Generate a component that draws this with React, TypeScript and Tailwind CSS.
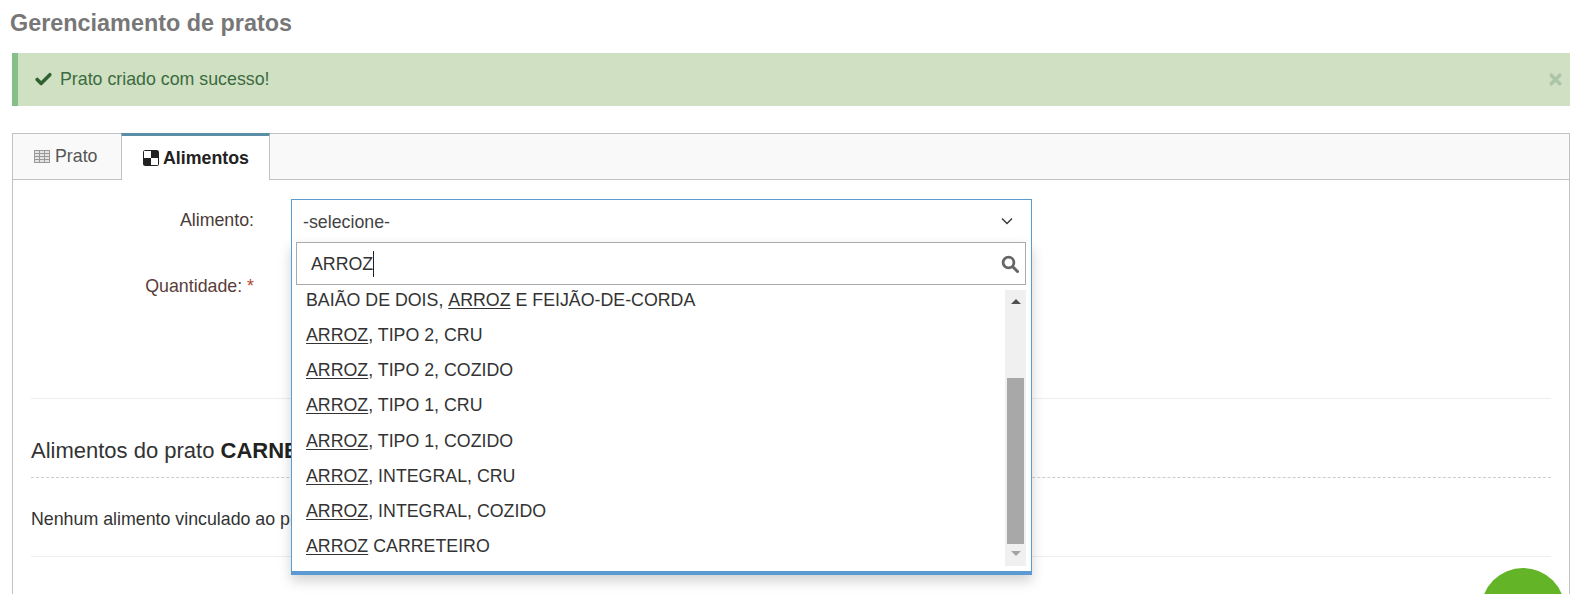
import { Check, X } from "lucide-react";

const options: [string, string, string][] = [
  ["BAIÃO DE DOIS, ", "ARROZ", " E FEIJÃO-DE-CORDA"],
  ["", "ARROZ", ", TIPO 2, CRU"],
  ["", "ARROZ", ", TIPO 2, COZIDO"],
  ["", "ARROZ", ", TIPO 1, CRU"],
  ["", "ARROZ", ", TIPO 1, COZIDO"],
  ["", "ARROZ", ", INTEGRAL, CRU"],
  ["", "ARROZ", ", INTEGRAL, COZIDO"],
  ["", "ARROZ", " CARRETEIRO"],
];

function CheckerIcon() {
  return (
    <svg width="16" height="16" viewBox="0 0 16 16" className="shrink-0">
      <rect width="16" height="16" rx="2.5" fill="#222" />
      <rect x="1" y="1" width="7" height="7" fill="#fff" />
      <rect x="8" y="8" width="7" height="7" fill="#fff" />
    </svg>
  );
}

function GridIcon() {
  return (
    <svg width="16" height="13" viewBox="0 0 16 13" className="shrink-0" fill="none" stroke="#999">
      <rect x="0.5" y="0.5" width="15" height="12" fill="#e4e4e4" />
      <path d="M5.5 0.5v12M10.5 0.5v12M0.5 3.5h15M0.5 6.5h15M0.5 9.5h15" />
    </svg>
  );
}

function SearchIcon() {
  return (
    <svg width="18" height="18" viewBox="0 0 18 18" className="ml-auto shrink-0" fill="none" stroke="#666">
      <circle cx="7.5" cy="7.5" r="5.4" strokeWidth="2.8" />
      <path d="M12 12l4.5 4.5" strokeWidth="3" strokeLinecap="round" />
    </svg>
  );
}

function Dropdown() {
  return (
    <div className="absolute left-0 top-[43px] z-10 h-[333px] w-[741px] border-x border-b-[4px] border-x-[#5b9bd1] border-b-[#5b9bd1] bg-white shadow-[0_6px_12px_rgba(0,0,0,0.18)]">
      <div className="ml-[4px] mr-[5px] flex h-[43px] items-center border border-[#aaa] pl-[14px] pr-[6px] text-[#333]">
        <span className="border-r border-[#222] leading-[26px]">ARROZ</span>
        <SearchIcon />
      </div>
      <div className="mt-[5px] flex h-[276px] pl-[14px] pr-[5px]">
        <ul className="min-w-0 flex-1 -mt-[7px] text-[#333]">
          {options.map(([before, match, after]) => (
            <li key={before + after} className="flex h-[35.1px] items-center whitespace-pre">
              {before}
              <span className="underline underline-offset-2">{match}</span>
              {after}
            </li>
          ))}
        </ul>
        <div className="flex w-[21px] flex-col items-center bg-[#f0f0f0]">
          <div className="h-[88px] w-full pt-[9px]">
            <div className="mx-auto h-0 w-0 border-x-[5px] border-b-[5px] border-x-transparent border-b-[#505050]" />
          </div>
          <div className="h-[166px] w-[17px] bg-[#a8a8a8]" />
          <div className="mt-[7px] h-0 w-0 border-x-[5px] border-t-[5px] border-x-transparent border-t-[#a3a3a3]" />
        </div>
      </div>
    </div>
  );
}

export default function App() {
  return (
    <div className="relative h-[594px] overflow-hidden bg-white font-['Liberation_Sans',Arial,sans-serif] text-[17.8px] text-[#333]">
      <h1 className="pl-[10px] pt-[11px] text-[23.4px] font-bold leading-[24px] text-[#777]">
        Gerenciamento de pratos
      </h1>

      <div className="mx-[12px] mt-[18px] flex h-[53px] w-[1558px] items-center border-l-[6px] border-[#85c088] bg-[#cfe0c3] pl-[16px] pr-[6px] text-[#3c6b3f]">
        <Check size={19} strokeWidth={4.5} className="mr-[7px] text-[#2f6133]" />
        <span>Prato criado com sucesso!</span>
        <X size={17} strokeWidth={5} className="ml-auto text-[#abc5a6]" />
      </div>

      <div className="ml-[12px] mt-[27px] w-[1558px] border border-[#c2c2c2] border-b-0 pb-[40px]">
        <div className="flex h-[46px] border-b border-[#c2c2c2] bg-[#f9f9f9]">
          <div className="flex w-[108px] items-center gap-[5px] pl-[21px] text-[#555]">
            <GridIcon />
            <span>Prato</span>
          </div>
          <div className="-mb-px -mt-px flex w-[149px] items-center gap-[4px] border-x border-t-[3px] border-x-[#c2c2c2] border-t-[#5a8ea6] bg-white pl-[21px] font-bold text-[#222]">
            <CheckerIcon />
            <span>Alimentos</span>
          </div>
        </div>

        <div className="px-[18px]">
          <div className="flex pt-[19px]">
            <div className="w-[223px] pt-[12px] text-right leading-[18px] text-[#4a3b38]">Alimento:</div>
            <div className="relative ml-[37px] w-[741px]">
              <div className="flex h-[44px] items-center border border-[#5b9bd1] pl-[11px] pr-[18px]">
                <span className="pt-[3px] text-[#444]">-selecione-</span>
                <svg width="12" height="8" viewBox="0 0 12 8" className="ml-auto" fill="none" stroke="#333" strokeWidth="1.3">
                  <path d="M1 1.5l5 5 5-5" />
                </svg>
              </div>
              <Dropdown />
            </div>
          </div>

          <div className="w-[223px] pt-[34px] text-right leading-[18px] text-[#5a3d38]">
            Quantidade: <span className="text-[#b5482f]">*</span>
          </div>

          <div className="mt-[103px] border-t border-[#eeeeee] pt-[39px]">
            <h2 className="text-[22px] leading-[26px] text-[#333]">
              Alimentos do prato <b className="text-[#222]">CARNE</b>
            </h2>
            <div className="mt-[13px] border-t border-dashed border-[#cccccc]" />
            <p className="mt-[32px] leading-[18px]">Nenhum alimento vinculado ao prato.</p>
            <div className="mt-[28px] border-t border-[#eeeeee]" />
          </div>
        </div>
      </div>

      <div className="absolute left-[1481px] top-[568px] h-[84px] w-[84px] rounded-full bg-[#64b427]" />
    </div>
  );
}
